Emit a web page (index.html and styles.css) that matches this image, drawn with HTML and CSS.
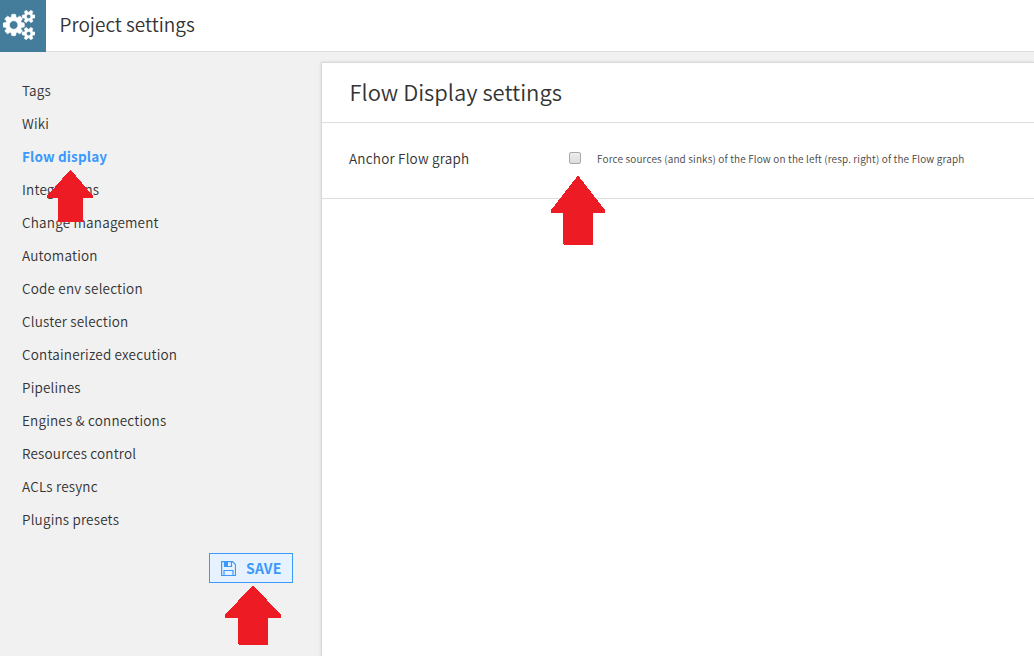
FILE: index.html
```html
<!DOCTYPE html>
<html lang="en">
<head>
<meta charset="utf-8">
<title>Project settings</title>
<link rel="stylesheet" href="styles.css">
</head>
<body>
<header class="topbar">
  <div class="topbar-icon">
    <svg width="32" height="30" viewBox="0 -260 1920 1800" fill="#fff" stroke="#fff" stroke-width="36"><path d="M896 640q0-106-75-181t-181-75-181 75-75 181 75 181 181 75 181-75 75-181zm768 512q0-52-38-90t-90-38-90 38-38 90q0 53 37.500 90.500t90.500 37.500 90.500-37.500 37.500-90.500zm0-1024q0-52-38-90t-90-38-90 38-38 90q0 53 37.500 90.500t90.500 37.500 90.500-37.500 37.500-90.500zm-384 421v185q0 10-7 19.500t-16 10.500l-155 24q-11 35-32 76 34 48 90 115 7 11 7 20 0 12-7 19-23 30-82.500 89.500t-78.500 59.500q-11 0-21-7l-115-90q-37 19-77 31-11 108-23 155-7 24-30 24h-186q-11 0-20-7.500t-10-17.500l-23-153q-34-10-75-31l-118 89q-7 7-20 7-11 0-21-8-144-133-144-160 0-9 7-19 10-14 41-53t47-61q-23-44-35-82l-152-24q-10-1-17-9.500t-7-19.500v-185q0-10 7-19.500t16-10.500l155-24q11-35 32-76-34-48-90-115-7-11-7-20 0-12 7-20 22-30 82-89t79-59q11 0 21 7l115 90q34-18 77-32 11-108 23-154 7-24 30-24h186q11 0 20 7.500t10 17.500l23 153q34 10 75 31l118-89q8-7 20-7 11 0 21 8 144 133 144 160 0 8-7 19-12 16-42 54t-45 60q23 48 34 82l152 23q10 2 17 10.500t7 19.500zm640 533v140q0 16-149 31-12 27-30 52 51 113 51 138 0 4-4 7-122 71-124 71-8 0-46-47t-52-68q-20 2-30 2t-30-2q-14 21-52 68t-46 47q-2 0-124-71-4-3-4-7 0-25 51-138-18-25-30-52-149-15-149-31v-140q0-16 149-31 13-29 30-52-51-113-51-138 0-4 4-7 4-2 35-20t59-34 30-16q8 0 46 46.500t52 67.500q20-2 30-2t30 2q51-71 92-112l6-2q4 0 124 70 4 3 4 7 0 25-51 138 17 23 30 52 149 15 149 31zm0-1024v140q0 16-149 31-12 27-30 52 51 113 51 138 0 4-4 7-122 71-124 71-8 0-46-47t-52-68q-20 2-30 2t-30-2q-14 21-52 68t-46 47q-2 0-124-71-4-3-4-7 0-25 51-138-18-25-30-52-149-15-149-31v-140q0-16 149-31 13-29 30-52-51-113-51-138 0-4 4-7 4-2 35-20t59-34 30-16q8 0 46 46.500t52 67.500q20-2 30-2t30 2q51-71 92-112l6-2q4 0 124 70 4 3 4 7 0 25-51 138 17 23 30 52 149 15 149 31z"/></svg>
  </div>
  <h1 class="topbar-title">Project settings</h1>
</header>
<div class="layout">
  <aside class="sidebar">
    <nav class="nav">
      <a class="nav-item">Tags</a>
      <a class="nav-item">Wiki</a>
      <a class="nav-item active">Flow display</a>
      <a class="nav-item">Integrations</a>
      <a class="nav-item">Change management</a>
      <a class="nav-item">Automation</a>
      <a class="nav-item">Code env selection</a>
      <a class="nav-item">Cluster selection</a>
      <a class="nav-item">Containerized execution</a>
      <a class="nav-item">Pipelines</a>
      <a class="nav-item">Engines &amp; connections</a>
      <a class="nav-item">Resources control</a>
      <a class="nav-item">ACLs resync</a>
      <a class="nav-item">Plugins presets</a>
    </nav>
    <button class="save" type="button">
      <svg width="15" height="15" viewBox="0 0 15 15" fill="none" stroke="#3b99fc" stroke-width="1.200"><path d="M.6.6h11l2.900 2.900v11H.6zM3.500.5v5h7v-5M3 14.500v-5h9v5"/><path d="M4 1h3v4H4z" fill="#3b99fc" stroke="none"/></svg>
      <span>SAVE</span>
    </button>
  </aside>
  <main class="panel">
    <h2 class="panel-title">Flow Display settings</h2>
    <div class="row">
      <span class="row-label">Anchor Flow graph</span>
      <span class="checkbox" role="checkbox" aria-checked="false"></span>
      <span class="row-help">Force sources (and sinks) of the Flow on the left (resp. right) of the Flow graph</span>
    </div>
  </main>
</div>
<svg class="arrow arrow-nav" width="46" height="52" viewBox="0 0 46 52"><path d="M23 0h1L46 26v2H36v24H11V28H0v-2z"/></svg>
<svg class="arrow arrow-check" width="54" height="69" viewBox="0 0 54 69"><path d="M26.500 0h1L54 34v3H42v31l-1 1H13l-1-1V37H0v-3z"/></svg>
<svg class="arrow arrow-save" width="56" height="59" viewBox="0 0 56 59"><path d="M27 0h2L56 29v3H43v26l-1 1H14l-1-1V32H0v-3z"/></svg>
</body>
</html>
```
FILE: styles.css
```css
* { box-sizing: border-box; }
body {
  margin: 0;
  height: 656px;
  overflow: hidden;
  position: relative;
  display: flex;
  flex-direction: column;
  background: #f1f1f1;
  color: #333;
  font-family: "Noto Sans CJK SC", "Noto Sans", sans-serif;
  font-weight: 350;
}
h1, h2 { margin: 0; font-weight: 350; }
.topbar {
  flex: none;
  height: 52px;
  display: flex;
  background: #fff;
  border-bottom: 1px solid #ddd;
}
.topbar-icon {
  width: 46px;
  height: 52px;
  padding: 10px 0 0 3px;
  background: #437d9b;
}
.topbar-icon svg { display: block; }
.topbar-title {
  padding-left: 13.500px;
  font-size: 19px;
  line-height: 48px;
}
.layout { flex: 1; display: flex; }
.sidebar {
  width: 321px;
  flex: none;
  padding: 22px 28px 0 22px;
  display: flex;
  flex-direction: column;
}
.nav { display: flex; flex-direction: column; }
.nav-item {
  height: 33px;
  line-height: 33px;
  font-size: 13.500px;
  letter-spacing: .19px;
  white-space: nowrap;
}
.nav-item.active { color: #3b99fc; font-weight: 700; letter-spacing: .15px; }
.save {
  align-self: flex-end;
  width: 84px;
  height: 30px;
  margin-top: 17px;
  padding: 0 0 0 11px;
  display: flex;
  align-items: center;
  gap: 10px;
  border: 1px solid #3b99fc;
  background: #e6f2ff;
  color: #3b99fc;
  font: 700 14px/28px "Noto Sans CJK SC", sans-serif;
  letter-spacing: .2px;
}
.panel {
  flex: 1;
  margin-top: 10px;
  background: #fff;
  border: solid #d9d9d9;
  border-width: 1px 0 0 1px;
  box-shadow: 0 0 3px rgba(0, 0, 0, .12);
}
.panel-title {
  height: 60px;
  padding-left: 27.500px;
  border-bottom: 1px solid #ddd;
  font-size: 22px;
  line-height: 57px;
}
.row {
  height: 76px;
  padding-left: 27px;
  display: flex;
  align-items: center;
  border-bottom: 1px solid #ddd;
}
.row-label { width: 220px; margin-bottom: 6px; font-size: 13.500px; letter-spacing: .22px; }
.checkbox {
  width: 12px;
  height: 12px;
  margin-bottom: 5px;
  border: 1px solid #aaa;
  border-radius: 2px;
  background: linear-gradient(#eee, #dcdcdc);
}
.row-help { margin: 0 0 5px 16px; font-size: 10px; letter-spacing: .15px; color: #444; white-space: nowrap; }
.arrow { position: absolute; fill: #ed1c24; shape-rendering: crispEdges; }
.arrow-nav { left: 47px; top: 170px; }
.arrow-check { left: 551px; top: 176px; }
.arrow-save { left: 225px; top: 586px; }
```
